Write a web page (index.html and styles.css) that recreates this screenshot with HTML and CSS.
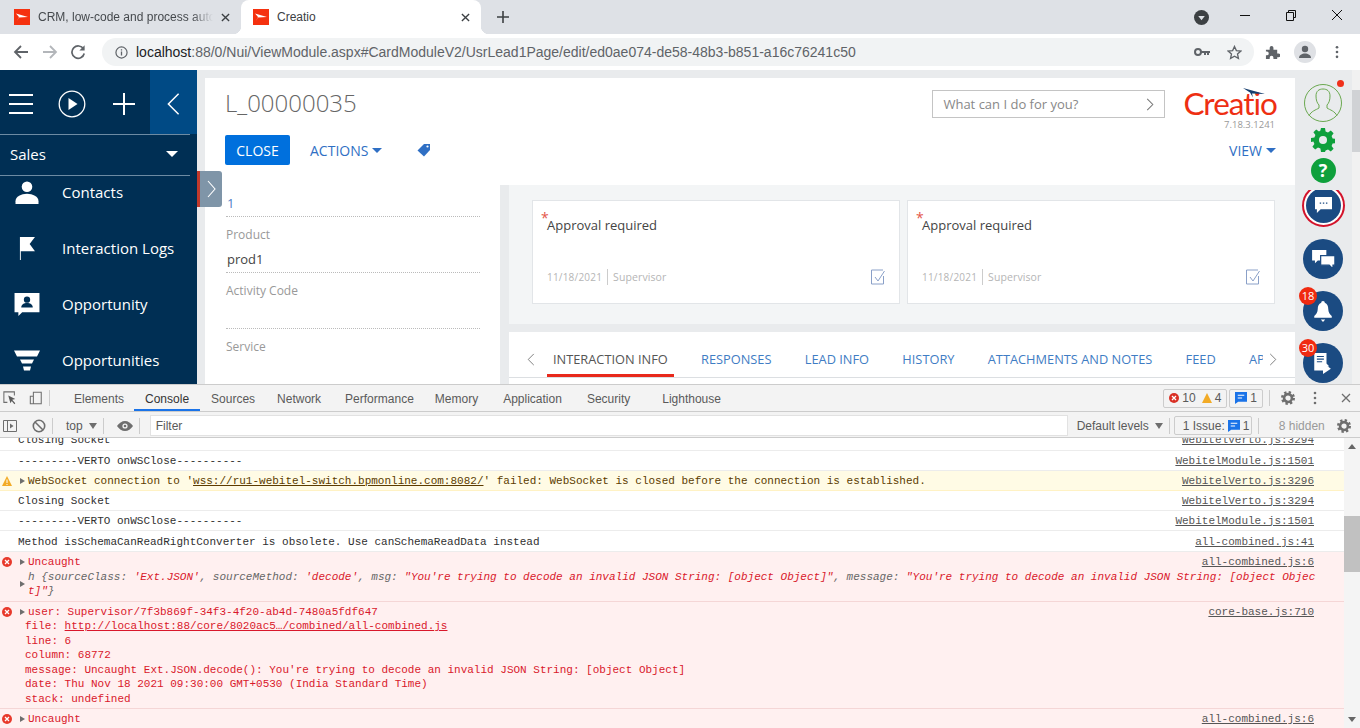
FILE: index.html
```html
<!DOCTYPE html>
<html lang="en">
  <head>
    <meta charset="utf-8" />
    <meta name="viewport" content="width=device-width, initial-scale=1.0" />
    <title>Creatio</title>
    <link rel="stylesheet" href="styles.css">
  </head>
  <body>
    <!-- browser tabs -->
    <div class="tabstrip">
      <div class="tab">
        <svg class="favicon" viewBox="0 0 16 16"><rect width="16" height="16" fill="#f5310f"/><path d="M2 4.500 14 8 5 8.600 3 12 5 8 2 4.500z" fill="#fff"/></svg>
        <span class="tab-title fade">CRM, low-code and process automation</span>
        <svg class="tab-close" viewBox="0 0 10 10"><path d="M1 1l8 8M9 1l-8 8" stroke="#3c4043" stroke-width="1.500"/></svg>
      </div>
      <div class="tab active">
        <svg class="favicon" viewBox="0 0 16 16"><rect width="16" height="16" fill="#f5310f"/><path d="M2 4.500 14 8 5 8.600 3 12 5 8 2 4.500z" fill="#fff"/></svg>
        <span class="tab-title">Creatio</span>
        <svg class="tab-close" viewBox="0 0 10 10"><path d="M1 1l8 8M9 1l-8 8" stroke="#3c4043" stroke-width="1.500"/></svg>
      </div>
      <svg class="new-tab" viewBox="0 0 12 12"><path d="M6 0v12M0 6h12" stroke="#3c4043" stroke-width="1.600"/></svg>
      <div class="win-buttons">
        <svg class="profile-menu" viewBox="0 0 16 16"><circle cx="8" cy="8" r="8" fill="#3c4043"/><path d="M4.500 6.500h7L8 11z" fill="#dee1e6"/></svg>
        <svg class="win-min" viewBox="0 0 12 12"><path d="M1 6.500h10" stroke="#111" stroke-width="1"/></svg>
        <svg class="win-max" viewBox="0 0 12 12"><path d="M1.500 3.500h7v8h-7zM3.500 3.500v-2h7v7h-2" fill="none" stroke="#111"/></svg>
        <svg class="win-close" viewBox="0 0 12 12"><path d="M1 1l10 10M11 1L1 11" stroke="#111"/></svg>
      </div>
    </div>

    <!-- address bar -->
    <div class="toolbar">
      <svg class="nav-ico" viewBox="0 0 16 16"><path d="M15 8H2M8 2 2 8l6 6" fill="none" stroke="#5f6368" stroke-width="1.800"/></svg>
      <svg class="nav-ico" viewBox="0 0 16 16"><path d="M1 8h13M8 2l6 6-6 6" fill="none" stroke="#b3b6ba" stroke-width="1.800"/></svg>
      <svg class="nav-ico" viewBox="0 0 16 16"><path d="M13.500 5A6.200 6.200 0 1 0 14.200 9.500" fill="none" stroke="#5f6368" stroke-width="1.700"/><path d="M14.600 1.200v5.200H9.400z" fill="#5f6368"/></svg>
      <div class="omnibox">
        <svg class="info-ico" viewBox="0 0 14 14"><circle cx="7" cy="7" r="6" fill="none" stroke="#5f6368" stroke-width="1.300"/><path d="M7 6v4.200M7 3.400v1.500" stroke="#5f6368" stroke-width="1.400"/></svg>
        <span class="url"><b>localhost</b>:88/0/Nui/ViewModule.aspx#CardModuleV2/UsrLead1Page/edit/ed0ae074-de58-48b3-b851-a16c76241c50</span>
        <svg class="key-ico" viewBox="0 0 16 10"><circle cx="4" cy="5" r="3" fill="none" stroke="#5f6368" stroke-width="2"/><path d="M7 4h9v2h-1v2h-2V6h-1v2h-2V6H7z" fill="#5f6368"/></svg>
        <svg class="star-ico" viewBox="0 0 16 16"><path d="M8 1.500l2 4.400 4.800.5-3.600 3.200 1 4.700L8 11.900l-4.200 2.400 1-4.700L1.200 6.400l4.800-.5z" fill="none" stroke="#5f6368" stroke-width="1.400"/></svg>
      </div>
      <svg class="puzzle-ico" viewBox="0 0 16 16"><path d="M1 5h4V3a2 2 0 0 1 4 0v2h4v4h1.500a2 2 0 0 1 0 4H13v2H9v-1.500a2 2 0 0 0-4 0V15H1v-4h1a2 2 0 0 0 0-4H1z" fill="#5f6368"/></svg>
      <div class="avatar-chip"><svg viewBox="0 0 16 16"><circle cx="8" cy="5" r="3.200" fill="#5f6368"/><path d="M2 14c0-3 3-4.500 6-4.500s6 1.500 6 4.500z" fill="#5f6368"/></svg></div>
      <svg class="dots-ico" viewBox="0 0 4 16"><circle cx="2" cy="2.500" r="1.500" fill="#5f6368"/><circle cx="2" cy="8" r="1.500" fill="#5f6368"/><circle cx="2" cy="13.500" r="1.500" fill="#5f6368"/></svg>
    </div>

    <!-- creatio page -->
    <div class="app">
      <div class="sidebar">
        <div class="side-top">
          <svg class="burger" viewBox="0 0 24 20"><path d="M0 1h24M0 10h24M0 19h24" stroke="#fff" stroke-width="2"/></svg>
          <svg class="play" viewBox="0 0 28 28"><circle cx="14" cy="14" r="12.800" fill="none" stroke="#fff" stroke-width="1.300"/><path d="M10.500 8l9 6-9 6z" fill="#fff"/></svg>
          <svg class="plus" viewBox="0 0 22 22"><path d="M11 0v22M0 11h22" stroke="#fff" stroke-width="2"/></svg>
          <div class="collapse"><svg viewBox="0 0 14 24"><path d="M12.500 1 1.500 12l11 11" fill="none" stroke="#fff" stroke-width="1.600"/></svg></div>
        </div>
        <div class="workplace"><span>Sales</span><i class="caret-white"></i></div>
        <div class="menu">
          <div class="menu-item">
            <svg viewBox="0 0 20 20"><circle cx="10" cy="5" r="4.600" fill="#fff"/><path d="M0 20v-2.500C0 13.500 5 11 10 11s10 2.500 10 6.500V20z" fill="#fff"/></svg>
            Contacts
          </div>
          <div class="menu-item">
            <svg viewBox="0 0 20 26"><path d="M2 0h17l-6 8 6 8H3v10H2z" fill="#fff"/></svg>
            Interaction Logs
          </div>
          <div class="menu-item">
            <svg viewBox="0 0 26 24"><path d="M0 0h26v20H8l-4 4v-4H0z" fill="#fff"/><circle cx="13" cy="7" r="3.300" fill="#002f54"/><path d="M7 15c0-3 3-4.500 6-4.500s6 1.500 6 4.500z" fill="#002f54"/></svg>
            Opportunity
          </div>
          <div class="menu-item">
            <svg viewBox="0 0 26 20"><path d="M0 0h26l-3 6H3zM6 9h14l-2 4H8zM9 16h8l-1 4h-6z" fill="#fff"/></svg>
            Opportunities
          </div>
        </div>
      </div>

      <div class="page">
        <div class="page-head">
          <div class="head-left">
            <div class="record-title">L_00000035</div>
            <div class="head-actions">
              <span class="btn-close">CLOSE</span>
              <span class="btn-link">ACTIONS<i class="caret-blue"></i></span>
              <svg class="tag-ico" viewBox="0 0 14 14"><path d="M7 1h6v6l-6 6.500L.5 7.500z" fill="#2f6fc4"/><circle cx="10.500" cy="3.500" r="1.100" fill="#fff"/></svg>
            </div>
          </div>
          <div class="head-right">
            <div class="search-row">
              <div class="search"><span>What can I do for you?</span><svg viewBox="0 0 8 14"><path d="M1 1l6 6-6 6" fill="none" stroke="#777" stroke-width="1.100"/></svg></div>
              <div class="logo">
                <svg class="logo-wing" viewBox="0 0 22 10"><path d="M0 0 22 6 9 5.500 10 9.500 7 4.500z" fill="#163f6f"/></svg>
                <span class="logo-text">Creatio</span>
                <span class="version">7.18.3.1241</span>
              </div>
            </div>
            <span class="btn-link view">VIEW<i class="caret-blue"></i></span>
          </div>
        </div>

        <div class="page-body">
          <div class="fields">
            <div class="field-link">1</div>
            <div class="field-label">Product</div>
            <div class="field-value">prod1</div>
            <div class="field-label">Activity Code</div>
            <div class="field-value"></div>
            <div class="field-label">Service</div>
          </div>
          <div class="details">
            <div class="approvals">
              <div class="card">
                <div class="card-title"><span class="star">*</span>Approval required</div>
                <div class="card-foot">
                  <span class="card-date">11/18/2021</span><span class="card-user">Supervisor</span>
                  <svg class="check-ico" viewBox="0 0 14 16"><path d="M12 1H.5v14h12V7" fill="none" stroke="#8aa0c8"/><path d="M4 8l3 4 6.500-10" fill="none" stroke="#8aa0c8"/></svg>
                </div>
              </div>
              <div class="card">
                <div class="card-title"><span class="star">*</span>Approval required</div>
                <div class="card-foot">
                  <span class="card-date">11/18/2021</span><span class="card-user">Supervisor</span>
                  <svg class="check-ico" viewBox="0 0 14 16"><path d="M12 1H.5v14h12V7" fill="none" stroke="#8aa0c8"/><path d="M4 8l3 4 6.500-10" fill="none" stroke="#8aa0c8"/></svg>
                </div>
              </div>
            </div>
            <div class="tabs-panel">
              <div class="tabs-row">
                <svg class="tab-arrow" viewBox="0 0 8 14"><path d="M7 1 1 7l6 6" fill="none" stroke="#777"/></svg>
                <div class="tabs">
                  <span class="detail-tab current">INTERACTION INFO</span>
                  <span class="detail-tab">RESPONSES</span>
                  <span class="detail-tab">LEAD INFO</span>
                  <span class="detail-tab">HISTORY</span>
                  <span class="detail-tab">ATTACHMENTS AND NOTES</span>
                  <span class="detail-tab">FEED</span>
                  <span class="detail-tab">APPROVALS</span>
                </div>
                <svg class="tab-arrow" viewBox="0 0 8 14"><path d="M1 1l6 6-6 6" fill="none" stroke="#777"/></svg>
              </div>
            </div>
          </div>
          <div class="handle"><svg viewBox="0 0 9 18"><path d="M1 1l7 8-7 8" fill="none" stroke="#fff" stroke-width="1.100"/></svg></div>
        </div>
      </div>

      <div class="rail">
        <div class="user-pic">
          <svg viewBox="0 0 38 38"><circle cx="19" cy="19" r="18.500" fill="none" stroke="#6aa84f"/><path d="M5 32c2-5 7-6 10-8v-3c-2-2-3-5-3-9 0-5 3-7 7-7s7 2 7 7c0 4-1 7-3 9v3c3 2 8 3 10 8" fill="none" stroke="#6aa84f"/></svg>
          <i class="red-dot"></i>
        </div>
        <svg class="gear" viewBox="0 0 24 24"><path d="M10 0h4l.6 3.400 2.400 1 2.800-2 2.800 2.800-2 2.800 1 2.400 3.400.6v4l-3.400.6-1 2.400 2 2.800-2.800 2.800-2.800-2-2.400 1L14 24h-4l-.6-3.400-2.400-1-2.800 2-2.800-2.800 2-2.800-1-2.400L0 14v-4l3.400-.6 1-2.400-2-2.800L5.200 1.400l2.800 2 1.400-1z" fill="#0fa03c"/><circle cx="12" cy="12" r="4" fill="#e9ebed"/></svg>
        <div class="help">?</div>
        <div class="chat-clip"><div class="rail-btn ringed"><svg viewBox="0 0 18 18"><path d="M0 0h18v13H6l-4 4v-4H0z" fill="#fff"/><path d="M5 6.500h1.500M8.300 6.500h1.500M11.600 6.500h1.500" stroke="#1b4b82" stroke-width="1.300"/></svg></div></div>
        <div class="rail-btn"><svg class="ico-chats" viewBox="0 0 24 20"><path d="M0 0h15v11H6l-3 3v-3H0z" fill="#fff"/><path d="M9 6h15v10h-2v4l-4-4H9z" fill="#fff" stroke="#1b4b82" stroke-width="1.300"/></svg></div>
        <div class="rail-btn"><svg class="ico-bell" viewBox="0 0 20 24"><path d="M10 0c1.500 0 2 1 2 2 3 1 4 4 4 7 0 4 2 6 4 8v2H0v-2c2-2 4-4 4-8 0-3 1-6 4-7 0-1 .5-2 2-2z" fill="#fff"/><path d="M7.500 21h5L10 24z" fill="#fff"/></svg><span class="badge">18</span></div>
        <div class="rail-btn"><svg class="ico-doc" viewBox="0 0 20 24"><path d="M0 0h14v12l3 3-7 2v3H0z" fill="#fff"/><path d="M3 4h8M3 7h8M3 10h6" stroke="#1b4b82" stroke-width="1.200"/><path d="M10 11l9 7-9 6z" fill="#fff"/></svg><span class="badge">30</span></div>
      </div>
      <div class="page-scroll"><div class="page-thumb"></div></div>
    </div>

    <!-- devtools -->
    <div class="devtools">
      <div class="dt-tabs">
        <svg class="dt-ico first" viewBox="0 0 16 16"><path d="M13 5V1H1v12h4" fill="none" stroke="#6e6e6e" stroke-width="1.200"/><path d="M6 5l8 4-3.500 1L14 14l-1 1-3-3.500L8.500 14z" fill="#5a5a5a"/></svg>
        <svg class="dt-ico" viewBox="0 0 16 16"><path d="M5 1.500h9v13H5zM1.500 6H5v8.500H1.500z" fill="none" stroke="#6e6e6e" stroke-width="1.200"/></svg>
        <i class="dt-sep"></i>
        <span class="dt-tab t-elements">Elements</span>
        <span class="dt-tab t-console">Console</span>
        <span class="dt-tab">Sources</span>
        <span class="dt-tab">Network</span>
        <span class="dt-tab t-perf">Performance</span>
        <span class="dt-tab t-memory">Memory</span>
        <span class="dt-tab t-app">Application</span>
        <span class="dt-tab t-security">Security</span>
        <span class="dt-tab t-light">Lighthouse</span>
        <div class="dt-right">
          <span class="counter"><svg viewBox="0 0 10 10"><circle cx="5" cy="5" r="5" fill="#d93025"/><path d="M3 3l4 4M7 3L3 7" stroke="#fff" stroke-width="1.300"/></svg>10<svg viewBox="0 0 10 10"><path d="M5 0l5 10H0z" fill="#f2ab26"/></svg>4</span>
          <span class="counter"><svg class="msg" viewBox="0 0 11 11"><path d="M0 0h11v9H3l-3 2z" fill="#1a73e8"/><path d="M2.500 3h6M2.500 5.500h4" stroke="#fff"/></svg>1</span>
          <i class="dt-sep"></i>
          <svg class="dt-gear" viewBox="0 0 16 16"><circle cx="8" cy="8" r="6.500" fill="none" stroke="#6e6e6e" stroke-width="3" stroke-dasharray="2.600 2.500"/><circle cx="8" cy="8" r="4.500" fill="none" stroke="#6e6e6e" stroke-width="3"/></svg>
          <svg class="dt-dots" viewBox="0 0 4 14"><circle cx="2" cy="2" r="1.300" fill="#6e6e6e"/><circle cx="2" cy="7" r="1.300" fill="#6e6e6e"/><circle cx="2" cy="12" r="1.300" fill="#6e6e6e"/></svg>
          <svg class="dt-x" viewBox="0 0 10 10"><path d="M1 1l8 8M9 1L1 9" stroke="#6e6e6e" stroke-width="1.300"/></svg>
        </div>
      </div>
      <div class="dt-filter">
        <svg class="dt-ico sidebar-ico" viewBox="0 0 14 14"><path d="M.5 1.500h13v11H.5zM4.500 1.500v11" fill="none" stroke="#6e6e6e"/><path d="M7 4.500l3.500 2.500L7 9.500z" fill="#6e6e6e"/></svg>
        <svg class="dt-ico clear-ico" viewBox="0 0 14 14"><circle cx="7" cy="7" r="5.700" fill="none" stroke="#6e6e6e" stroke-width="1.600"/><path d="M3 3l8 8" stroke="#6e6e6e" stroke-width="1.600"/></svg>
        <i class="dt-sep"></i>
        <span class="ctx">top</span><i class="down"></i>
        <i class="dt-sep sep-eye"></i>
        <svg class="dt-ico eye-ico" viewBox="0 0 16 10"><path d="M0 5c2-3 5-5 8-5s6 2 8 5c-2 3-5 5-8 5S2 8 0 5z" fill="#6e6e6e"/><circle cx="8" cy="5" r="2.600" fill="#f3f3f3"/><circle cx="8" cy="5" r="1.300" fill="#6e6e6e"/></svg>
        <i class="dt-sep"></i>
        <div class="filter-input">Filter</div>
        <span class="levels">Default levels</span><i class="down"></i>
        <i class="dt-sep"></i>
        <span class="issues">1 Issue: <svg class="msg" viewBox="0 0 11 11"><path d="M0 0h11v9H3l-3 2z" fill="#1a73e8"/><path d="M2.500 3h6M2.500 5.500h4" stroke="#fff"/></svg> 1</span>
        <i class="dt-sep"></i>
        <span class="hidden-count">8 hidden</span>
        <svg class="dt-gear filter-gear" viewBox="0 0 16 16"><circle cx="8" cy="8" r="6.500" fill="none" stroke="#6e6e6e" stroke-width="3" stroke-dasharray="2.600 2.500"/><circle cx="8" cy="8" r="4.500" fill="none" stroke="#6e6e6e" stroke-width="3"/></svg>
      </div>
      <div class="console-wrap">
        <div class="console">
          <div class="row clipped"><span>Closing Socket</span><a>WebitelVerto.js:3294</a></div>
          <div class="row"><span>---------VERTO onWSClose----------</span><a>WebitelModule.js:1501</a></div>
          <div class="row warn">
            <svg class="lvl" viewBox="0 0 10 10"><path d="M5 0l5 10H0z" fill="#f2ab26"/><path d="M5 3.500v3.500M5 8v1" stroke="#fff"/></svg>
            <i class="tri"></i><span>WebSocket connection to '<u>wss://ru1-webitel-switch.bpmonline.com:8082/</u>' failed: WebSocket is closed before the connection is established.</span><a>WebitelVerto.js:3296</a>
          </div>
          <div class="row"><span>Closing Socket</span><a>WebitelVerto.js:3294</a></div>
          <div class="row"><span>---------VERTO onWSClose----------</span><a>WebitelModule.js:1501</a></div>
          <div class="row tall"><span>Method isSchemaCanReadRightConverter is obsolete. Use canSchemaReadData instead</span><a>all-combined.js:41</a></div>

          <div class="err">
            <div class="err-line">
              <svg class="lvl" viewBox="0 0 10 10"><circle cx="5" cy="5" r="5" fill="#e8392b"/><path d="M3 3l4 4M7 3L3 7" stroke="#fff" stroke-width="1.300"/></svg>
              <i class="tri"></i><span>Uncaught</span><a>all-combined.js:6</a>
            </div>
            <div class="obj"><i class="tri mid"></i><span><em class="k">h {sourceClass: </em><em>'Ext.JSON'</em><em class="k">, sourceMethod: </em><em>'decode'</em><em class="k">, msg: </em><em>"You're trying to decode an invalid JSON String: [object Object]"</em><em class="k">, message: </em><em>"You're trying to decode an invalid JSON String: [object Objec<br>t]"</em><em class="k">}</em></span></div>
          </div>

          <div class="err">
            <div class="err-line">
              <svg class="lvl" viewBox="0 0 10 10"><circle cx="5" cy="5" r="5" fill="#e8392b"/><path d="M3 3l4 4M7 3L3 7" stroke="#fff" stroke-width="1.300"/></svg>
              <i class="tri"></i><span>user: Supervisor/7f3b869f-34f3-4f20-ab4d-7480a5fdf647</span><a>core-base.js:710</a>
            </div>
            <div class="detail">file: <u>http://localhost:88/core/8020ac5…/combined/all-combined.js</u></div>
            <div class="detail">line: 6</div>
            <div class="detail">column: 68772</div>
            <div class="detail">message: Uncaught Ext.JSON.decode(): You're trying to decode an invalid JSON String: [object Object]</div>
            <div class="detail">date: Thu Nov 18 2021 09:30:00 GMT+0530 (India Standard Time)</div>
            <div class="detail">stack: undefined</div>
          </div>

          <div class="err">
            <div class="err-line">
              <svg class="lvl" viewBox="0 0 10 10"><circle cx="5" cy="5" r="5" fill="#e8392b"/><path d="M3 3l4 4M7 3L3 7" stroke="#fff" stroke-width="1.300"/></svg>
              <i class="tri"></i><span>Uncaught</span><a>all-combined.js:6</a>
            </div>
            <div class="obj"><i class="tri mid"></i><span><em class="k">h {sourceClass: </em><em>'Ext.JSON'</em><em class="k">, sourceMethod: </em><em>'decode'</em><em class="k">, msg: </em><em>"You're trying to decode an invalid JSON String: [object Object]"</em></span></div>
          </div>
        </div>
        <div class="console-scroll">
          <i class="sb-up"></i>
          <div class="sb-thumb"></div>
          <i class="sb-down"></i>
        </div>
      </div>
    </div>
  </body>
</html>
```

FILE: styles.css
```css
* {
    box-sizing: border-box;
}

html, body {
    margin: 0;
    height: 728px;
    overflow: hidden;
    background: White;
}

body {
    display: flex;
    flex-direction: column;
    font-family: "Open Sans", sans-serif;
}

svg {
    display: block;
    flex: none;
}

i, em {
    font-style: normal;
}

/* browser tabs */
.tabstrip {
    display: flex;
    align-items: center;
    height: 34px;
    flex: none;
    padding-left: 1px;
    background: #dee1e6;
}

.tab {
    position: relative;
    display: flex;
    align-items: center;
    width: 240px;
    height: 34px;
    padding: 0 11px 0 13px;
    font-family: "Liberation Sans", sans-serif;
    font-size: 12px;
    color: #45494d;
}

.tab.active {
    padding-left: 12px;
    background: White;
    border-radius: 8px 8px 0 0;
    color: #3c4043;
}

.tab.active::before, .tab.active::after {
    content: "";
    position: absolute;
    bottom: 0;
    width: 8px;
    height: 8px;
}

.tab.active::before {
    left: -8px;
    background: radial-gradient(circle at 0 0, transparent 8px, White 8.500px);
}

.tab.active::after {
    right: -8px;
    background: radial-gradient(circle at 100% 0, transparent 8px, White 8.500px);
}

.favicon {
    width: 16px;
    height: 16px;
}

.tab-title {
    flex: 1;
    margin-left: 8px;
    white-space: nowrap;
    overflow: hidden;
}

.tab-title.fade {
    -webkit-mask-image: linear-gradient(to right, Black 88%, transparent 100%);
}

.tab-close {
    width: 9px;
    height: 9px;
    margin-left: 8px;
}

.new-tab {
    width: 12px;
    height: 12px;
    margin-left: 16px;
}

.win-buttons {
    display: flex;
    align-items: center;
    margin-left: auto;
    padding-right: 17px;
}

.profile-menu {
    width: 15px;
    height: 15px;
}

.win-min, .win-max, .win-close {
    width: 12px;
    height: 12px;
    margin-top: -5px;
}

.win-min {
    margin-left: 30px;
}

.win-max, .win-close {
    margin-left: 34px;
}

/* address bar */
.toolbar {
    display: flex;
    align-items: center;
    height: 36px;
    flex: none;
    padding-left: 13px;
    background: White;
}

.nav-ico {
    width: 16px;
    height: 16px;
    margin-right: 13px;
}

.nav-ico:nth-child(2) {
    margin-right: 12px;
}

.nav-ico:nth-child(3) {
    margin-right: 16px;
}

.omnibox {
    display: flex;
    align-items: center;
    width: 1152px;
    height: 28px;
    padding: 0 12px 0 13px;
    border-radius: 14px;
    background: #f1f3f4;
}

.info-ico {
    width: 13px;
    height: 13px;
}

.url {
    flex: 1;
    margin-left: 8px;
    font-family: "Liberation Sans", sans-serif;
    font-size: 14px;
    color: #5f6368;
    white-space: nowrap;
}

.url b {
    font-weight: normal;
    color: #202124;
}

.key-ico {
    width: 16px;
    height: 10px;
}

.star-ico {
    width: 15px;
    height: 15px;
    margin-left: 17px;
}

.puzzle-ico {
    width: 15px;
    height: 15px;
    margin-left: 11px;
}

.avatar-chip {
    width: 22px;
    height: 22px;
    margin-left: 14px;
    padding: 3px;
    border-radius: 50%;
    background: #dfe1e5;
}

.dots-ico {
    width: 4px;
    height: 14px;
    margin-left: 19px;
}

/* creatio page */
.app {
    display: flex;
    height: 314px;
    flex: none;
    background: #e9ebed;
}

.sidebar {
    width: 197px;
    flex: none;
    overflow: hidden;
    background: #002f54;
    color: White;
}

.side-top {
    display: flex;
    align-items: center;
    height: 64px;
    padding-left: 9px;
}

.burger {
    width: 24px;
    height: 20px;
    margin-top: 4px;
}

.play {
    width: 28px;
    height: 28px;
    margin: 4px 0 0 25px;
}

.plus {
    width: 22px;
    height: 22px;
    margin: 4px 0 0 27px;
}

.collapse {
    display: flex;
    align-items: center;
    justify-content: center;
    width: 47px;
    height: 64px;
    margin-left: auto;
    padding-top: 4px;
    background: #004a85;
}

.collapse svg {
    width: 13px;
    height: 24px;
}

.workplace {
    display: flex;
    align-items: center;
    justify-content: space-between;
    width: 190px;
    height: 42px;
    padding: 0 12px 2px 10px;
    border-top: 1px solid #6d8ba3;
    border-bottom: 1px solid #6d8ba3;
    font-size: 15px;
}

.caret-white {
    width: 0;
    height: 0;
    border: 6px solid transparent;
    border-top-color: White;
    border-bottom: 0;
}

.menu {
    margin-top: -12px;
}

.menu-item {
    display: flex;
    align-items: center;
    height: 56px;
    padding-left: 14px;
    font-size: 15px;
}

.menu-item svg {
    width: 26px;
    height: 23px;
    margin-right: 22px;
}

.page {
    position: relative;
    flex: 1;
    min-width: 0;
    padding: 8px 0 0 8px;
}

.page-head {
    display: flex;
    justify-content: space-between;
    height: 107px;
    padding: 0 18px 0 20px;
    background: White;
}

.record-title {
    margin-top: 8px;
    font-size: 24px;
    font-weight: 300;
    line-height: 33px;
    color: #666;
}

.head-actions {
    display: flex;
    align-items: center;
    margin-top: 16px;
}

.btn-close {
    width: 65px;
    height: 30px;
    border-radius: 2px;
    background: #0070dd;
    font-size: 14px;
    line-height: 31px;
    text-align: center;
    color: White;
}

.btn-link {
    display: flex;
    align-items: center;
    margin-left: 20px;
    font-size: 14px;
    color: #2f6fc4;
}

.caret-blue {
    width: 0;
    height: 0;
    margin-left: 4px;
    border: 5px solid transparent;
    border-top-color: #2f6fc4;
    border-bottom: 0;
}

.tag-ico {
    width: 14px;
    height: 14px;
    margin-left: 35px;
}

.head-right {
    display: flex;
    flex-direction: column;
    align-items: flex-end;
}

.search-row {
    display: flex;
}

.search {
    display: flex;
    align-items: center;
    justify-content: space-between;
    width: 233px;
    height: 28px;
    margin-top: 12px;
    padding: 0 10px;
    border: 1px solid #c4c4c4;
    font-size: 13px;
    color: #888;
}

.search svg {
    width: 8px;
    height: 13px;
}

.logo {
    position: relative;
    display: flex;
    flex-direction: column;
    align-items: flex-end;
    margin: 10px 0 0 18px;
}

.logo-wing {
    position: absolute;
    top: 0;
    right: 12px;
    width: 22px;
    height: 10px;
}

.logo-text {
    font-family: "Lato", sans-serif;
    font-size: 31.500px;
    line-height: 30px;
    letter-spacing: -1px;
    color: #ee2f12;
}

.version {
    margin-right: 2px;
    font-size: 9.500px;
    line-height: 14px;
    color: #999;
}

.view {
    margin: 9px 1px 0 0;
}

.page-body {
    display: flex;
    height: 199px;
    overflow: hidden;
}

.fields {
    width: 295px;
    flex: none;
    padding: 9px 20px 0 21px;
    background: White;
}

.field-link {
    height: 23px;
    padding-left: 1px;
    border-bottom: 1px dotted #bbb;
    font-size: 13px;
    line-height: 18px;
    color: #4f7fc8;
}

.field-label {
    height: 32px;
    padding-top: 9px;
    font-size: 12px;
    line-height: 18px;
    color: #999;
}

.field-value {
    height: 24px;
    padding-left: 1px;
    border-bottom: 1px dotted #bbb;
    font-size: 13px;
    line-height: 20px;
    color: #444;
}

.details {
    flex: 1;
    min-width: 0;
    padding-left: 9px;
}

.approvals {
    display: flex;
    gap: 7px;
    height: 139px;
    padding: 15px 20px 0 23px;
    background: #f3f5f6;
}

.card {
    flex: 1;
    height: 104px;
    padding: 14px 14px 0 14px;
    border: 1px solid #e2e5e8;
    background: White;
}

.card-title {
    position: relative;
    font-size: 13px;
    line-height: 20px;
    color: #444;
}

.star {
    position: absolute;
    top: -7px;
    left: -6px;
    font-size: 14px;
    color: #e4564a;
}

.card-foot {
    display: flex;
    align-items: center;
    margin-top: 34px;
    font-size: 10px;
    letter-spacing: .2px;
    color: #b5b5b5;
}

.card-date {
    padding-right: 5px;
    border-right: 1px solid #ccc;
    line-height: 16px;
}

.card-user {
    padding-left: 5px;
    font-size: 10.500px;
    letter-spacing: .1px;
}

.check-ico {
    width: 14px;
    height: 16px;
    margin-left: auto;
}

.tabs-panel {
    height: 52px;
    margin-top: 8px;
    background: White;
}

.tabs-row {
    display: flex;
    align-items: flex-start;
    height: 46px;
    padding: 0 18px;
    border-bottom: 1px solid #dcdfe2;
}

.tab-arrow {
    width: 8px;
    height: 13px;
    margin-top: 21px;
}

.tabs {
    display: flex;
    flex: 1;
    min-width: 0;
    height: 45px;
    margin: 0 6px 0 12px;
    overflow: hidden;
    white-space: nowrap;
}

.detail-tab {
    padding: 17px 6px 0;
    margin-right: 21.300px;
    font-size: 12.800px;
    line-height: 20px;
    color: #3f7dc4;
}

.detail-tab.current {
    border-bottom: 3px solid #e8291c;
    color: #555;
}

.handle {
    position: absolute;
    top: 101px;
    left: 0;
    display: flex;
    align-items: center;
    justify-content: center;
    width: 25px;
    height: 36px;
    border-left: 3px solid #c0392b;
    border-radius: 0 3px 3px 0;
    background: #7f95a8;
}

.handle svg {
    width: 9px;
    height: 18px;
}

.rail {
    display: flex;
    flex-direction: column;
    align-items: center;
    width: 57px;
    flex: none;
    padding: 14px 1px 0 0;
}

.user-pic {
    position: relative;
    width: 38px;
    height: 38px;
}

.red-dot {
    position: absolute;
    top: -4px;
    right: -2px;
    width: 7px;
    height: 7px;
    border-radius: 50%;
    background: #f0301a;
}

.gear {
    width: 24px;
    height: 24px;
    margin-top: 6px;
}

.help {
    width: 25px;
    height: 25px;
    margin-top: 6px;
    border-radius: 50%;
    background: #0fa03c;
    font-size: 18px;
    font-weight: 700;
    line-height: 25px;
    text-align: center;
    color: White;
}

.chat-clip {
    display: flex;
    justify-content: center;
    width: 46px;
    height: 37px;
    margin-top: 7px;
    overflow: hidden;
}

.rail-btn {
    position: relative;
    display: flex;
    align-items: center;
    justify-content: center;
    width: 40px;
    height: 40px;
    flex: none;
    margin-top: 12px;
    border-radius: 50%;
    background: #1b4b82;
}

.chat-clip .rail-btn {
    width: 35px;
    height: 35px;
    margin-top: -2px;
}

.ringed {
    box-shadow: 0 0 0 2px White, 0 0 0 4px #d3132b;
}

.rail-btn svg {
    width: 17px;
    height: 17px;
}

.rail-btn .ico-chats {
    width: 23px;
    height: 19px;
}

.rail-btn .ico-bell {
    width: 18px;
    height: 21px;
}

.rail-btn .ico-doc {
    width: 18px;
    height: 21px;
}

.badge {
    position: absolute;
    top: -4px;
    left: -4px;
    width: 18px;
    height: 18px;
    border-radius: 50%;
    background: #f02a10;
    font-size: 11px;
    line-height: 18px;
    text-align: center;
    color: White;
}

.page-scroll {
    width: 8px;
    flex: none;
    padding-top: 20px;
    background: #f1f1f1;
}

.page-thumb {
    height: 62px;
    background: #d0d2d5;
}

/* devtools */
.devtools {
    display: flex;
    flex-direction: column;
    flex: 1;
    min-height: 0;
    border-top: 1px solid #ccc;
    font-family: "Liberation Sans", sans-serif;
    font-size: 12px;
    color: #5a5a5a;
}

.dt-tabs, .dt-filter {
    position: relative;
    display: flex;
    align-items: center;
    flex: none;
    background: #f3f3f3;
    border-bottom: 1px solid #ccc;
}

.dt-tabs {
    height: 27px;
}

.dt-filter {
    height: 26px;
    padding-top: 2px;
}

.dt-ico {
    width: 14px;
    height: 14px;
    margin-left: 12px;
}

.dt-ico.first {
    margin-left: 3px;
}

.dt-sep {
    width: 1px;
    height: 16px;
    margin: 0 6px;
    background: #ccc;
}

.dt-right .dt-sep {
    margin-right: 5px;
}

.dt-tab {
    height: 26px;
    padding: 1px 11px 0;
    line-height: 26px;
    white-space: nowrap;
}

.t-console {
    border-bottom: 2px solid #1a73e8;
    color: #333;
}

.t-elements { margin-left: 7px; }
.t-console { margin-left: -1px; }
.t-perf { margin-left: 2px; }
.t-memory { margin-left: -1px; }
.t-app { margin-left: 3px; }
.t-security { margin-left: 3px; }
.t-light { margin-left: 10px; }

.dt-right {
    display: flex;
    align-items: center;
    margin-left: auto;
    padding-right: 9px;
}

.counter {
    display: flex;
    align-items: center;
    gap: 3px;
    height: 19px;
    margin-left: 2px;
    padding: 0 5px;
    border: 1px solid #ccc;
    border-radius: 2px;
}

.counter svg {
    width: 10px;
    height: 10px;
}

.counter svg + svg {
    margin-left: 3px;
}

.counter .msg, .issues .msg {
    width: 12px;
    height: 12px;
}

.dt-gear {
    width: 14px;
    height: 14px;
    margin-left: 6px;
}

.filter-gear {
    margin-left: 12px;
}

.dt-dots {
    width: 4px;
    height: 14px;
    margin-left: 18px;
}

.dt-x {
    width: 10px;
    height: 10px;
    margin-left: 24px;
}

.sidebar-ico {
    margin-left: 3px;
}

.clear-ico {
    margin-left: 15px;
}

.eye-ico {
    width: 16px;
    height: 10px;
    margin-left: 3px;
}

.sep-eye {
    margin-right: 10px;
}

.ctx {
    margin-left: 7px;
}

.down {
    width: 0;
    height: 0;
    margin-left: 6px;
    border: 4px solid transparent;
    border-top: 6px solid #6e6e6e;
    border-bottom: 0;
}

.filter-input {
    width: 918px;
    height: 21px;
    margin-left: 4px;
    padding-left: 5px;
    border: 1px solid #e2e2e2;
    background: White;
    line-height: 20px;
}

.levels {
    margin-left: 9px;
}

.issues {
    display: flex;
    align-items: center;
    gap: 3px;
    width: 78px;
    height: 19px;
    margin-left: -2px;
    padding: 0 0 0 8px;
    border: 1px solid #ccc;
    border-radius: 2px;
    white-space: nowrap;
}

.hidden-count {
    margin-left: 14px;
    color: #9a9a9a;
}

.console-wrap {
    display: flex;
    flex: 1;
    min-height: 0;
    overflow: hidden;
    background: White;
}

.console {
    flex: 1;
    min-width: 0;
    font-family: "Liberation Mono", monospace;
    font-size: 11px;
    color: #303030;
}

.row {
    display: flex;
    align-items: center;
    height: 20px;
    padding: 0 30px 0 18px;
    border-bottom: 1px solid #ececec;
    white-space: pre;
}

.row a, .err-line a {
    margin-left: auto;
    color: #555;
    text-decoration: underline;
}

.row.clipped {
    height: 13px;
    overflow: hidden;
    align-items: flex-end;
    line-height: 20px;
}

.row.tall {
    height: 21px;
    padding-top: 2px;
}

.row.warn {
    padding-left: 2px;
    background: #fffbe5;
    border-bottom-color: #fff2c4;
    color: #5c3b00;
}

.lvl {
    width: 10px;
    height: 10px;
    flex: none;
    margin-right: 8px;
}

.tri {
    flex: none;
    width: 0;
    height: 0;
    margin-right: 3px;
    border: 3.500px solid transparent;
    border-left: 5px solid #6e6e6e;
    border-right: 0;
}

.err {
    padding: 3px 30px 2px 2px;
    border-bottom: 1px solid #f5d6d6;
    background: #fff0f0;
    color: #d9182b;
    line-height: 14.500px;
    white-space: nowrap;
}

.err-line {
    display: flex;
    align-items: center;
    height: 14.500px;
}

.obj {
    display: flex;
    align-items: center;
    padding-left: 18px;
    font-style: italic;
    white-space: pre;
}

.obj em {
    font-style: italic;
}

.obj .k {
    color: #666;
}

.mid {
    margin-right: 3px;
}

.detail {
    padding-left: 23px;
}

.console-scroll {
    position: relative;
    width: 16px;
    flex: none;
    background: #f4f4f4;
}

.sb-thumb {
    height: 56px;
    margin-top: 78px;
    background: #c1c1c1;
}

.sb-up, .sb-down {
    position: absolute;
    left: 4px;
    width: 0;
    height: 0;
    border: 4px solid transparent;
}

.sb-up {
    top: 6px;
    border-bottom: 5px solid #666;
    border-top: 0;
}

.sb-down {
    bottom: 6px;
    border-top: 5px solid #666;
    border-bottom: 0;
}
```
